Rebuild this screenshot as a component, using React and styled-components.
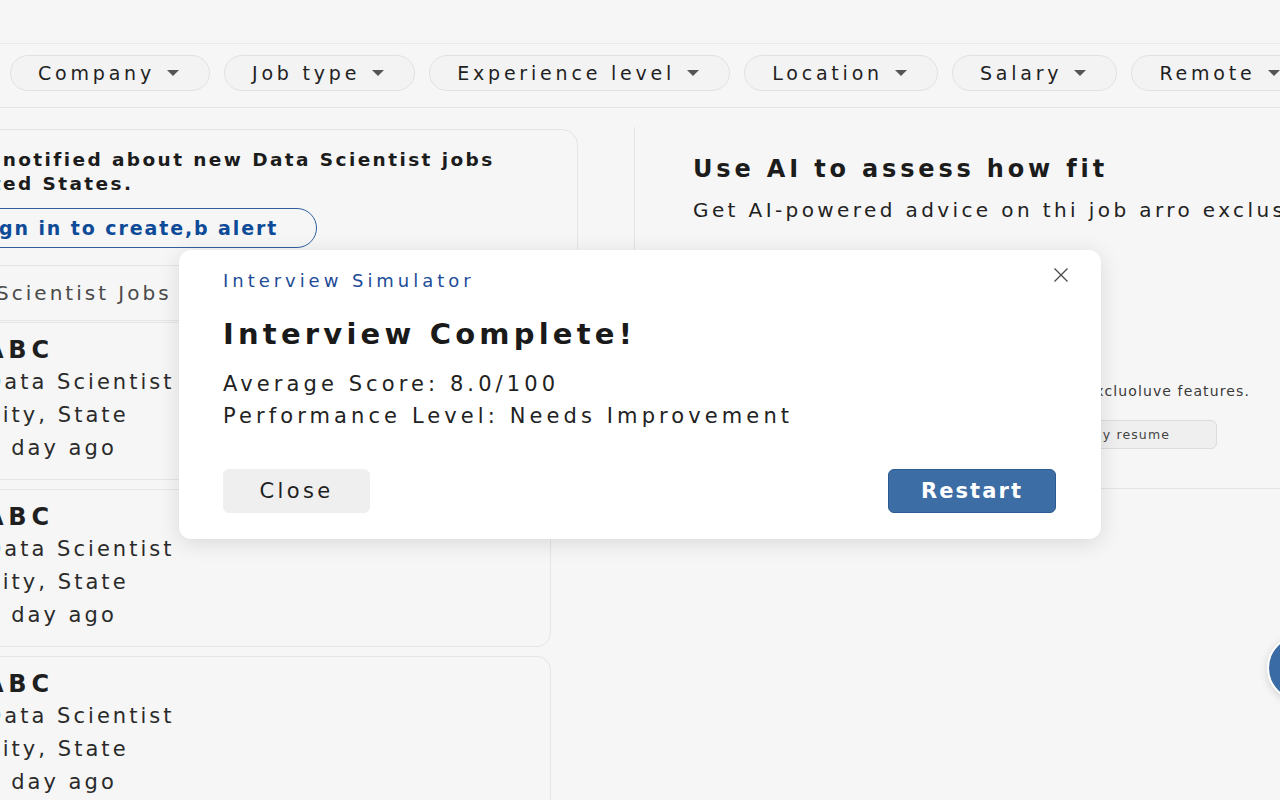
import React, { useState } from 'react';
import styled, { createGlobalStyle } from 'styled-components';

const GlobalStyle = createGlobalStyle`
    html, body {
        margin: 0;
        padding: 0;
        background: #f6f6f6;
    }
    body {
        font-family: "DejaVu Sans", "Liberation Sans", sans-serif;
        color: #1f1f1f;
    }
    * {
        box-sizing: border-box;
    }
`;

const filters = ['Company', 'Job type', 'Experience level', 'Location', 'Salary', 'Remote'];

const jobs = [
    { company: 'ABC', title: 'Data Scientist', place: 'City, State', posted: '1 day ago' },
    { company: 'ABC', title: 'Data Scientist', place: 'City, State', posted: '1 day ago' },
    { company: 'ABC', title: 'Data Scientist', place: 'City, State', posted: '1 day ago' },
];

const App = () => {
    const [open, setOpen] = useState(true);

    return (
        <Page>
            <GlobalStyle />
            <TopBar />
            <FilterBar>
                {filters.map((f) => (
                    <FilterPill key={f}>
                        {f}
                        <Caret />
                    </FilterPill>
                ))}
            </FilterBar>

            <Main>
                <LeftColumn>
                    <AlertCard>
                        <AlertText>
                            Get notified about new Data Scientist jobs
                            <br />
                            United States.
                        </AlertText>
                        <OutlineButton>Sign in to create,b alert</OutlineButton>
                    </AlertCard>
                    <ResultsHeader>Data Scientist Jobs in United States</ResultsHeader>
                    <JobList>
                        {jobs.map((job, i) => (
                            <JobCard key={i}>
                                <CompanyName>{job.company}</CompanyName>
                                <JobLine>{job.title}</JobLine>
                                <JobLine>{job.place}</JobLine>
                                <JobLine>{job.posted}</JobLine>
                            </JobCard>
                        ))}
                    </JobList>
                </LeftColumn>

                <RightPanel>
                    <PanelTitle>Use AI to assess how fit</PanelTitle>
                    <PanelText>Get AI-powered advice on thi job arro exclusive features.</PanelText>
                    <PanelNote>Sign in to unlock excluoluve features.</PanelNote>
                    <ButtonRow>
                        <GhostButton>Tailor my resume</GhostButton>
                    </ButtonRow>
                </RightPanel>
            </Main>

            <FloatingButton aria-label="Open assistant" />

            {open && (
                <Overlay>
                    <Dialog>
                        <DialogHeader>
                            <DialogEyebrow>Interview Simulator</DialogEyebrow>
                            <CloseIcon onClick={() => setOpen(false)} aria-label="Close">
                                <svg width="16" height="16" viewBox="0 0 16 16">
                                    <path d="M1.5 1.5 L14.5 14.5 M14.5 1.5 L1.5 14.5" stroke="#4a4a4a" strokeWidth="1.3" fill="none" />
                                </svg>
                            </CloseIcon>
                        </DialogHeader>
                        <DialogTitle>Interview Complete!</DialogTitle>
                        <DialogBody>
                            <DialogText>Average Score: 8.0/100</DialogText>
                            <DialogText>Performance Level: Needs Improvement</DialogText>
                        </DialogBody>
                        <DialogActions>
                            <DialogButton onClick={() => setOpen(false)}>Close</DialogButton>
                            <DialogButton $primary>Restart</DialogButton>
                        </DialogActions>
                    </Dialog>
                </Overlay>
            )}
        </Page>
    );
};

export default App;

const Page = styled.div`
    position: relative;
    width: 1280px;
    height: 800px;
    overflow: hidden;
    background: #f6f6f6;
`;

const TopBar = styled.div`
    height: 44px;
    border-bottom: 1px solid #e9e9e9;
`;

const FilterBar = styled.div`
    height: 64px;
    display: flex;
    align-items: center;
    gap: 14px;
    padding: 0 0 5px 10px;
    border-bottom: 1px solid #e6e6e6;
    white-space: nowrap;
`;

const FilterPill = styled.button`
    flex: none;
    display: flex;
    align-items: center;
    height: 36px;
    padding: 0 30px 0 27px;
    border: 1px solid #e1e1e1;
    border-radius: 18px;
    background: #f3f3f3;
    font-family: inherit;
    font-size: 19px;
    letter-spacing: 0.2em;
    color: #1f1f1f;
`;

const Caret = styled.span`
    width: 0;
    height: 0;
    margin-left: 12px;
    border-left: 6px solid transparent;
    border-right: 6px solid transparent;
    border-top: 6px solid #555;
`;

const Main = styled.div`
    display: flex;
    align-items: flex-start;
`;

const LeftColumn = styled.div`
    flex: none;
    width: 658px;
    margin-left: -80px;
    margin-top: 21px;
`;

const AlertCard = styled.div`
    border: 1px solid #e4e4e4;
    border-radius: 16px;
    padding: 18px 20px 17px 29px;
`;

const AlertText = styled.div`
    font-size: 18.5px;
    line-height: 24px;
    font-weight: 700;
    letter-spacing: 0.13em;
    white-space: nowrap;
    color: #1c1c1c;
`;

const OutlineButton = styled.button`
    margin-top: 12px;
    height: 40px;
    padding: 0 38px 0 24px;
    border: 1px solid #2f5f9f;
    border-radius: 20px;
    background: transparent;
    font-family: inherit;
    font-size: 19px;
    font-weight: 700;
    letter-spacing: 0.1em;
    color: #0d4a98;
`;

const ResultsHeader = styled.div`
    height: 55px;
    display: flex;
    align-items: center;
    padding-left: 7px;
    border-bottom: 1px solid #e6e6e6;
    font-size: 20px;
    letter-spacing: 0.15em;
    color: #4a4a4a;
    white-space: nowrap;
`;

const JobList = styled.div`
    display: flex;
    flex-direction: column;
    gap: 9px;
    margin-top: 1px;
    margin-right: 27px;
`;

const JobCard = styled.div`
    height: 158px;
    padding: 12px 0 0 64px;
    border: 1px solid #e5e5e5;
    border-radius: 14px;
`;

const CompanyName = styled.div`
    font-size: 24px;
    line-height: 30px;
    font-weight: 700;
    letter-spacing: 0.2em;
    margin-bottom: 1px;
`;

const JobLine = styled.div`
    font-size: 21px;
    line-height: 33px;
    letter-spacing: 0.145em;
    color: #2a2a2a;
`;

const RightPanel = styled.div`
    flex: 1;
    min-width: 0;
    margin-left: 56px;
    margin-top: 19px;
    height: 362px;
    padding: 25px 30px 0 58px;
    border-left: 1px solid #e3e3e3;
    border-bottom: 1px solid #e3e3e3;
    white-space: nowrap;
`;

const PanelTitle = styled.div`
    font-size: 24px;
    line-height: 34px;
    font-weight: 700;
    letter-spacing: 0.16em;
    color: #1c1c1c;
`;

const PanelText = styled.div`
    margin-top: 10px;
    font-size: 20px;
    line-height: 28px;
    letter-spacing: 0.17em;
    color: #222;
`;

const PanelNote = styled.div`
    margin-top: 157px;
    font-size: 14px;
    line-height: 20px;
    letter-spacing: 0.08em;
    color: #3a3a3a;
    text-align: right;
`;

const ButtonRow = styled.div`
    margin-top: 19px;
    margin-right: 33px;
    display: flex;
    justify-content: flex-end;
    gap: 8px;
`;

const GhostButton = styled.button`
    height: 29px;
    padding: 0 46px 0 16px;
    border: 1px solid #dcdcdc;
    border-radius: 6px;
    background: #efefef;
    font-family: inherit;
    font-size: 12.5px;
    letter-spacing: 0.09em;
    color: #444;
`;

const FloatingButton = styled.button`
    position: absolute;
    right: -53px;
    top: 635px;
    width: 66px;
    height: 66px;
    border-radius: 50%;
    border: 2px solid #fff;
    background: #3a6ba5;
    box-shadow: 0 2px 8px rgba(0, 0, 0, 0.15);
`;

// modal
const Overlay = styled.div`
    position: absolute;
    inset: 0;
    display: flex;
    justify-content: center;
    align-items: center;
    padding-bottom: 12px;
    z-index: 1000;
`;

const Dialog = styled.div`
    width: 922px;
    padding: 19px 45px 26px 44px;
    background: #fff;
    border-radius: 12px;
    box-shadow: 0 4px 22px rgba(0, 0, 0, 0.12);
`;

const DialogHeader = styled.div`
    display: flex;
    align-items: center;
    justify-content: space-between;
`;

const DialogEyebrow = styled.div`
    font-size: 18px;
    line-height: 24px;
    letter-spacing: 0.22em;
    color: #1d4c97;
`;

const CloseIcon = styled.button`
    display: flex;
    margin: -12px -13px 0 0;
    padding: 0;
    border: none;
    background: none;
    cursor: pointer;
`;

const DialogTitle = styled.div`
    margin-top: 23px;
    font-size: 29px;
    line-height: 36px;
    font-weight: 700;
    letter-spacing: 0.145em;
    color: #1a1a1a;
`;

const DialogBody = styled.div`
    margin-top: 16px;
`;

const DialogText = styled.div`
    font-size: 21px;
    line-height: 32px;
    letter-spacing: 0.195em;
    color: #222;
`;

const DialogActions = styled.div`
    display: flex;
    justify-content: space-between;
    margin-top: 37px;
`;

const DialogButton = styled.button`
    height: 44px;
    width: ${(props) => (props.$primary ? '168px' : '147px')};
    border-radius: 6px;
    border: 1px solid ${(props) => (props.$primary ? '#2c5b93' : '#efefef')};
    background: ${(props) => (props.$primary ? '#3d6da5' : '#efefef')};
    color: ${(props) => (props.$primary ? '#fff' : '#1f1f1f')};
    font-family: inherit;
    font-size: 21px;
    font-weight: ${(props) => (props.$primary ? 700 : 400)};
    letter-spacing: ${(props) => (props.$primary ? '0.1em' : '0.16em')};
    cursor: pointer;
`;
